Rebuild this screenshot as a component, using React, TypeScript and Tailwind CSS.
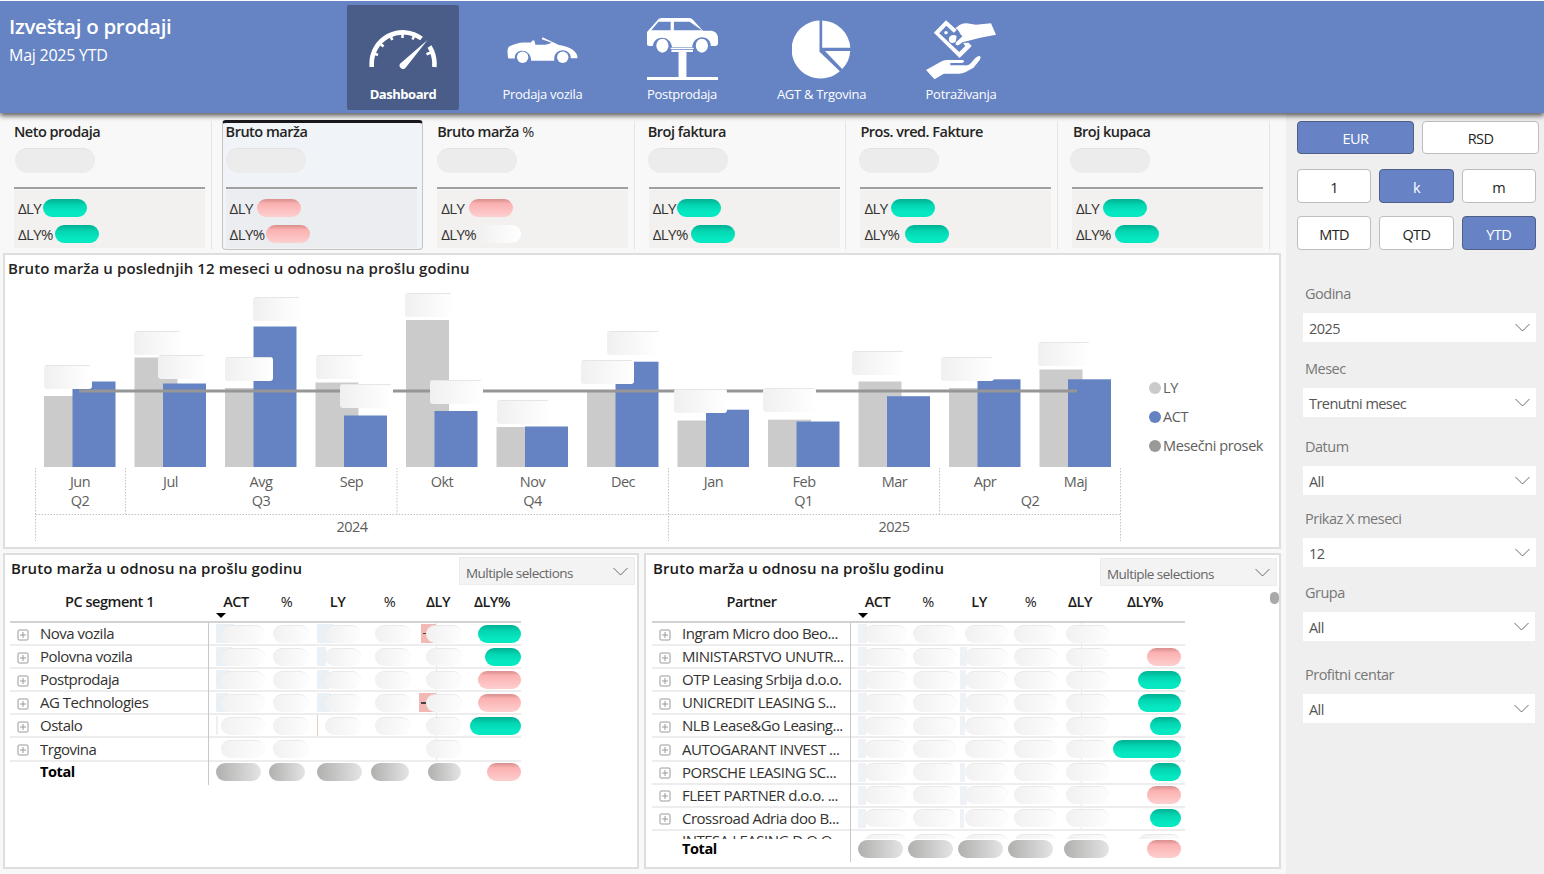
import type { ReactNode } from 'react';
import clsx from 'clsx';

type Tone = 'green' | 'red' | 'blank';

interface Kpi {
  title: ReactNode;
  titleClass?: string;
  pillClass?: string;
  delta: [Tone, string];
  deltaPct: [Tone, string];
  selected?: boolean;
}

interface Row {
  name: string;
  cells: string[];
  act?: string;
  ly?: string;
  diff?: string;
  tone?: Tone;
  size?: string;
}

const TONES: Record<Tone, string> = {
  green: 'bg-linear-to-b from-[#00b596] from-5% via-[#03d6b2] via-35% to-[#06e8c1] to-75%',
  red: 'bg-linear-to-b from-[#dc9492] from-5% via-[#fbb0b0] via-25% to-[#fdcfcf]',
  blank: 'bg-linear-to-r from-[#f0f0f0] to-white',
};

const KPIS: Kpi[] = [
  { title: 'Neto prodaja', pillClass: 'ml-px', delta: ['green', 'w-[25px]'], deltaPct: ['green', 'w-[37px]'] },
  { title: 'Bruto marža', delta: ['red', 'w-[27px]'], deltaPct: ['red', 'w-[36px]'], selected: true },
  { title: <>Bruto marža <span className="font-normal">%</span></>, delta: ['red', 'w-[28px]'], deltaPct: ['blank', 'w-[36px]'] },
  { title: 'Broj faktura', titleClass: '-ml-px', pillClass: '-ml-px', delta: ['green', 'w-[24px]'], deltaPct: ['green', 'w-[38px]'] },
  { title: 'Pros. vred. Fakture', pillClass: '-ml-px', delta: ['green', 'w-[27px]'], deltaPct: ['green', 'w-[41px]'] },
  { title: 'Broj kupaca', titleClass: 'ml-px', pillClass: '-ml-[2px]', delta: ['green', 'w-[27px]'], deltaPct: ['green', 'w-[39px]'] },
];

// tops of the LY and ACT bars per month
const MONTHS = [
  { name: 'Jun', ly: 396, act: 381.5 },
  { name: 'Jul', ly: 357.5, act: 383.5 },
  { name: 'Avg', ly: 388, act: 326.5 },
  { name: 'Sep', ly: 382.5, act: 415.5 },
  { name: 'Okt', ly: 320, act: 411 },
  { name: 'Nov', ly: 427, act: 426.5 },
  { name: 'Dec', ly: 391, act: 361.7 },
  { name: 'Jan', ly: 420.5, act: 409.7 },
  { name: 'Feb', ly: 419.7, act: 421.5 },
  { name: 'Mar', ly: 381.5, act: 396.2 },
  { name: 'Apr', ly: 388, act: 379.3 },
  { name: 'Maj', ly: 369.5, act: 379.3 },
];

const VALUE_BOXES = [
  [44, 365, 48], [134, 331, 48], [158, 355, 48], [253, 297, 48], [225, 357, 48], [316, 355, 48],
  [340, 384, 53], [405, 293, 48], [430, 380, 53], [497, 400, 53], [607, 331, 53], [581, 360, 53],
  [674, 389, 53], [763, 388, 53], [852, 351, 53], [941, 357, 53], [1038, 342, 53],
];

const ALL = ['a', 'p', 'l', 'q', 'd'];

const SEGMENTS: Row[] = [
  { name: 'Nova vozila', cells: ALL, act: 'w-[18px]', ly: 'w-[16px]', diff: 'left-[10px] w-[15px]', tone: 'green', size: 'w-[43px]' },
  { name: 'Polovna vozila', cells: ALL, act: 'w-[16px]', ly: 'w-[9px]', tone: 'green', size: 'w-[36px]' },
  { name: 'Postprodaja', cells: ALL, act: 'w-[14px]', ly: 'w-[12px]', tone: 'red', size: 'w-[43px]' },
  { name: 'AG Technologies', cells: ALL, act: 'w-[12px]', ly: 'w-[14px]', diff: 'left-[8px] w-[17px]', tone: 'red', size: 'w-[43px]' },
  { name: 'Ostalo', cells: ALL, act: 'w-[2px]', tone: 'green', size: 'w-[51px]' },
  { name: 'Trgovina', cells: ['a', 'p', 'd'] },
];

const PARTNERS: Row[] = [
  { name: 'Ingram Micro doo Beo...', cells: ALL, act: 'w-[9px]' },
  { name: 'MINISTARSTVO UNUTR...', cells: ALL, act: 'w-[9px]', ly: 'w-[7px]', tone: 'red', size: 'w-[34px]' },
  { name: 'OTP Leasing Srbija d.o.o.', cells: ALL, act: 'w-[9px]', ly: 'w-[6px]', tone: 'green', size: 'w-[43px]' },
  { name: 'UNICREDIT LEASING S...', cells: ALL, act: 'w-[9px]', ly: 'w-[6px]', tone: 'green', size: 'w-[43px]' },
  { name: 'NLB Lease&Go Leasing...', cells: ALL, act: 'w-[8px]', ly: 'w-[5px]', tone: 'green', size: 'w-[31px]' },
  { name: 'AUTOGARANT INVEST ...', cells: ALL, act: 'w-[8px]', tone: 'green', size: 'w-[68px]' },
  { name: 'PORSCHE LEASING SC...', cells: ALL, act: 'w-[8px]', ly: 'w-[5px]', tone: 'green', size: 'w-[31px]' },
  { name: 'FLEET PARTNER d.o.o. ...', cells: ALL, act: 'w-[8px]', ly: 'w-[7px]', tone: 'red', size: 'w-[34px]' },
  { name: 'Crossroad Adria doo B...', cells: ALL, act: 'w-[8px]', ly: 'w-[4px]', tone: 'green', size: 'w-[31px]' },
];

const FILTERS = [
  { label: 'Godina', value: '2025', gap: 'mt-[34px]', width: 'w-[233px]' },
  { label: 'Mesec', value: 'Trenutni mesec', gap: 'mt-[17px]', width: 'w-[233px]' },
  { label: 'Datum', value: 'All', gap: 'mt-[20px]', width: 'w-[233px]' },
  { label: 'Prikaz X meseci', value: '12', gap: 'mt-[14px]', width: 'w-[233px]' },
  { label: 'Grupa', value: 'All', gap: 'mt-[16px]', width: 'w-[232px]' },
  { label: 'Profitni centar', value: 'All', gap: 'mt-[24px]', width: 'w-[232px]' },
];

function GaugeIcon() {
  return (
    <svg width="68" height="40" viewBox="0 0 68 40" fill="none" stroke="white">
      <path d="M2.700 38v-2.500A31.200 31.200 0 0 1 52.500 9.500M60.500 17.500A33 33 0 0 1 65.300 38" strokeWidth="4.600" />
      <path d="M5 24.500l4 1.500M11 14.500l3.500 3M21.500 7l1.800 4M33.500 3v6M45.500 6l-2 4.500M62 23.500l-4.500 1.700" strokeWidth="2.600" />
      <path d="M58.500 11 36.800 38.500a3.300 3.300 0 0 1-5.500-4z" fill="white" stroke="none" />
    </svg>
  );
}

function ConvertibleIcon() {
  return (
    <svg width="71" height="27" viewBox="0 0 200 80" preserveAspectRatio="none" fill="white">
      <path d="M3 62C1 48 0 34 6 28 18 22 34 16 48 16h20l3-6h6l3 13h28c8-2 15-5 18-6L98 7l2-6 46 23c24 4 40 11 49 25 3 4 4 9 3 14h-18c0-32-46-32-47 0v7H68C68 32 20 32 22 64H6z" />
      <ellipse cx="44" cy="60" rx="16" ry="17" />
      <ellipse cx="157" cy="60" rx="16" ry="17" />
    </svg>
  );
}

function LiftIcon() {
  return (
    <svg width="71" height="62" viewBox="0 0 198 186" preserveAspectRatio="none" fill="white">
      <path fillRule="evenodd" d="M0 78V42L28 8q4-8 12-8h78q6 0 10 5l28 33h24q14 2 18 18v20q0 8-8 8h-12c0-36-50-36-52 4H70C66 50 20 50 16 84 6 84 0 84 0 78zM32 11 12 37h54V11H40zM75 11v26h78l-34-26z" />
      <ellipse cx="43" cy="83" rx="17" ry="21" />
      <ellipse cx="153" cy="83" rx="17" ry="21" />
      <path d="M66 89h64v4H66zM68 95h60v7h-18v75h88v9H0v-9h88v-75H68z" />
    </svg>
  );
}

function PieIcon() {
  return (
    <svg width="59" height="59" viewBox="0 0 59 59" fill="white">
      <path d="M27.500.500v31.200L47.800 51.200A29 29 0 1 1 27.500.500z" />
      <path d="M30.200.500A29 29 0 0 1 58.300 27.800H30.200z" />
      <path d="M33 31h25.200a28 28 0 0 1-8 18z" />
    </svg>
  );
}

function HandsIcon() {
  return (
    <svg width="70" height="60" viewBox="0 0 196 180" preserveAspectRatio="none" fill="white">
      <path fillRule="evenodd" d="M56 1 86 30 78 38 57 17 37 40 93 96 110 78 104 69 119 68 128 78 94 114 22 38z" />
      <circle cx="56" cy="38" r="5" />
      <path d="M64 56c2-10 12-14 22-8l-3 17c-9 8-20 3-19-9z" />
      <path d="M82 25 94 15q8-6 20-5l26 4 42-4 14 34-44 9-22 6-28 8-10 8q-12 4-8-8l18-18c-10-10-8-18-20-25z" />
      <path d="M0 150l44-26q7-4 16-4h42q10 2 0 9H68v7h40q12 2 18-7l12-15q12-10 15-3l-2 8-18 24-23 14q-10 5-22 4H50L24 178z" />
    </svg>
  );
}

const NAV = [
  { label: 'Dashboard', icon: <GaugeIcon />, active: true },
  { label: 'Prodaja vozila', icon: <ConvertibleIcon />, pad: 'pb-[16px]' },
  { label: 'Postprodaja', icon: <LiftIcon /> },
  { label: 'AGT & Trgovina', icon: <PieIcon />, pad: 'pb-px' },
  { label: 'Potraživanja', icon: <HandsIcon /> },
];

function Chevron() {
  return (
    <svg width="15" height="9" viewBox="0 0 15 9" fill="none" stroke="#6b6b6b">
      <path d="M.5 1l7 7 7-7" />
    </svg>
  );
}

function KpiCard({ kpi }: { kpi: Kpi }) {
  const rows = [
    { label: 'ΔLY', value: kpi.delta },
    { label: 'ΔLY%', value: kpi.deltaPct },
  ];
  return (
    <div className="w-[211.6px] shrink-0 pl-[10px]">
      <div
        className={clsx(
          'h-[130px] border border-t-[3px] pl-[3px]',
          kpi.selected ? 'rounded-[4px] border-[#c4c4c4] border-t-[#17171c] bg-[#f0f3f7]' : 'border-transparent border-r-[#e4e4e4]',
        )}
      >
        <h3 className={clsx('text-[14.5px] leading-[18px] font-semibold tracking-[-0.5px] text-[#252423]', kpi.titleClass)}>{kpi.title}</h3>
        <div className={clsx('mt-[7px] h-[25px] w-[80px] rounded-full border-t border-[#e2e2e2] bg-[#ececec]', kpi.pillClass)} />
        <div className="mt-[14px] h-[2px] w-[191px] bg-[#a0a0a0]" />
        <div className={clsx('mt-px flex h-[58px] w-[191px] flex-col gap-2 pt-[9px] pl-1', kpi.selected ? 'bg-[#ebedf1]' : 'bg-[#f2f1ef]')}>
          {rows.map(({ label, value: [tone, width] }) => (
            <div key={label} className="flex h-[18px] items-center">
              <span className={clsx('shrink-0 text-[15px] leading-[16px] tracking-[-0.6px] text-[#33322f]', width)}>{label}</span>
              <span className={clsx('h-[18px] w-[44px] rounded-full', TONES[tone])} />
            </div>
          ))}
        </div>
      </div>
    </div>
  );
}

function TrendChart() {
  return (
    <svg className="block" width="1140" height="260" viewBox="5 282 1140 260" fontSize="14.5" letterSpacing="-0.5">
      <defs>
        <linearGradient id="box" x1="0" x2="1">
          <stop offset="0" stopColor="#f0f0f0" />
          <stop offset="1" stopColor="#ffffff" />
        </linearGradient>
      </defs>
      {MONTHS.map((m, i) => (
        <g key={m.name}>
          <rect x={44 + i * 90.5} y={m.ly} width="43" height={467 - m.ly} fill="#cbcbcb" />
          <rect x={72.5 + i * 90.5} y={m.act} width="43" height={467 - m.act} fill="#6583c3" />
          <text x={80 + i * 90.5} y="486.500" textAnchor="middle" fill="#605e5c">{m.name}</text>
        </g>
      ))}
      <path d="M79 391H1077" stroke="#969696" strokeWidth="3" />
      {VALUE_BOXES.map(([x, y, w]) => (
        <g key={`${x}-${y}`}>
          <rect x={x} y={y} width={w} height="24" rx="3" fill="url(#box)" />
          <path d={`M${x + 2} ${y + 0.5}h${w - 4}`} stroke="#e6e6e6" />
        </g>
      ))}
      <g fill="#605e5c" textAnchor="middle">
        <text x="80" y="506">Q2</text>
        <text x="261" y="506">Q3</text>
        <text x="532.500" y="506">Q4</text>
        <text x="803.500" y="506">Q1</text>
        <text x="1030" y="506">Q2</text>
        <text x="352" y="532">2024</text>
        <text x="894" y="532">2025</text>
      </g>
      <path
        d="M35.500 514.500H1120.500M35.500 468V541M125.500 468V514M397 468V514M668.500 468V541M939.500 468V514M1120.500 468V541"
        stroke="#c4c4c4"
        strokeDasharray="1.500 1.500"
        fill="none"
      />
    </svg>
  );
}

function Selector({ className }: { className?: string }) {
  return (
    <div className={clsx('flex h-[28px] items-center justify-between border border-[#ececec] bg-[#f3f3f3] pr-[6px] pl-[6px]', className)}>
      <span className="pt-[4px] text-[13.5px] leading-[18px] tracking-[-0.55px] text-[#666]">Multiple selections</span>
      <Chevron />
    </div>
  );
}

function Expander() {
  return (
    <svg width="12" height="12" viewBox="0 0 12 12" fill="none" stroke="#9a9a9a">
      <rect x="1" y="1" width="10" height="10" rx="1" />
      <path d="M3 6h6M6 3v6" />
    </svg>
  );
}

function GhostPill({ className }: { className: string }) {
  return <span className={clsx('relative h-[18px] rounded-full border-t border-[#e9e9e9] bg-linear-to-r from-[#f1f1f1] to-[#fdfdfd]', className)} />;
}

interface MatrixProps {
  heading: string;
  grid: string;
  rows: Row[];
  headPads: string[];
  widths: string[];
  totals: string[];
  totalDelta: string;
  lyLeft: string;
  diffLeft: string;
  endPad: string;
  tint: string;
  clippedRow?: string;
}

function Matrix(p: MatrixProps) {
  const headers = ['ACT', '%', 'LY', '%', 'ΔLY', 'ΔLY%'];
  return (
    <div className="text-[15px] tracking-[-0.5px] text-[#33322f]">
      <div className={clsx('relative grid h-[45px] border-b-2 border-[#d2d2d2] pt-[14px] text-[14.5px] leading-5 font-semibold tracking-[-0.45px] text-[#1c1b1a]', p.grid)}>
        <span className="text-center">{p.heading}</span>
        {headers.map((h, i) => (
          <span key={i} className={clsx('text-center', p.headPads[i], h === '%' && 'font-medium')}>{h}</span>
        ))}
        <span className="absolute bottom-[3px] left-[206px] border-x-[5px] border-t-[5px] border-x-transparent border-t-black" />
      </div>
      {p.rows.map((row) => (
        <div key={row.name} className={clsx('grid h-[23.1px] border-b-2 border-[#ededed]', p.grid)}>
          <span className="-mb-[2px] flex items-center gap-[11px] border-r border-[#c8c8c8] pl-[7px] leading-[21px] whitespace-nowrap">
            <Expander />
            <span className="-mt-[2px]">{row.name}</span>
          </span>
          {ALL.map((k, i) => (
            <span key={k} className="relative flex items-center justify-end">
              {k === 'a' && row.act && <i className={clsx('absolute top-[1px] left-[7px] h-[19px]', p.tint, row.act)} />}
              {k === 'l' && row.ly && <i className={clsx('absolute top-[1px] h-[19px]', p.tint, p.lyLeft, row.ly)} />}
              {k === 'l' && row.name === 'Ostalo' && <i className="absolute top-0 left-[8px] h-full w-px bg-[#e8cfc4]" />}
              {k === 'd' && <i className={clsx('absolute top-0 h-full w-px bg-[#e8e8e8]', p.diffLeft)} />}
              {k === 'd' && row.diff && (
                <i className={clsx('absolute top-[1px] flex h-[19px] items-center bg-[#f2b8b3]', row.diff)}>
                  <b className="ml-[2px] h-[1.5px] w-[5px] bg-[#444]" />
                </i>
              )}
              {row.cells.includes(k) && <GhostPill className={p.widths[i]} />}
            </span>
          ))}
          <span className={clsx('flex items-center justify-end', p.endPad)}>
            {row.tone && <span className={clsx('h-[18px] rounded-full', TONES[row.tone], row.size)} />}
          </span>
        </div>
      ))}
      {p.clippedRow && (
        <div className={clsx('grid h-[8px] overflow-hidden', p.grid)}>
          <span className="h-[8px] overflow-hidden border-r border-[#c8c8c8] pl-[30px] leading-[19px] whitespace-nowrap">{p.clippedRow}</span>
          {p.widths.map((w, i) => (
            <span key={i} className="flex justify-end pt-[3px]"><GhostPill className={w} /></span>
          ))}
          <span className="flex justify-end pt-[3px] pr-1"><GhostPill className="w-[43px]" /></span>
        </div>
      )}
      <div className={clsx('grid h-[20px]', p.grid)}>
        <span className="-mb-[3px] flex items-start border-r border-[#c8c8c8] pl-[30px] text-[14.5px] leading-[20px] font-bold tracking-[-0.4px] text-black">Total</span>
        {p.totals.map((t, i) => (
          <span key={i} className="flex items-center justify-end">
            <span className={clsx('h-[18px] shrink-0 rounded-full bg-linear-to-r from-[#b0b0af] to-[#e4e4e4]', t)} />
          </span>
        ))}
        <span className={clsx('flex items-center justify-end', p.endPad)}>
          <span className={clsx('h-[18px] rounded-full', TONES.red, p.totalDelta)} />
        </span>
      </div>
    </div>
  );
}

function Toggle({ children, active, className }: { children: ReactNode; active?: boolean; className: string }) {
  return (
    <button
      className={clsx(
        'flex items-center justify-center rounded-[4px] border pt-[3px] text-[14.5px] tracking-[-0.6px]',
        active ? 'border-[#4f5f86] bg-[#6783c5] text-white' : 'border-[#bdbdbd] bg-white text-[#252423]',
        className,
      )}
    >
      {children}
    </button>
  );
}

export default function App() {
  return (
    <div className="flex h-[874px] w-[1544px] flex-col overflow-hidden bg-[#f8f8f8] font-['Open_Sans','Noto_Sans',sans-serif]">
      <header className="relative z-10 flex h-[113px] shrink-0 border-t border-white bg-[#6683c3] text-white shadow-[0_3px_5px_rgba(0,0,0,0.6)]">
        <div className="w-[347px] pt-[12px] pl-[9px]">
          <h1 className="text-[20.500px] leading-[26px] font-semibold tracking-[-0.3px]">Izveštaj o prodaji</h1>
          <p className="mt-[5px] text-[16px] leading-[22px] tracking-[-0.25px]">Maj 2025 YTD</p>
        </div>
        <nav className="flex gap-[27.500px] pt-[4px]">
          {NAV.map((item) => (
            <a key={item.label} className={clsx('flex h-[105px] w-[112px] flex-col items-center rounded-[2px]', item.active && 'bg-[#4a5d88]')}>
              <span className={clsx('flex h-[75px] items-end', item.active ? 'pb-[11px]' : item.pad)}>{item.icon}</span>
              <span className={clsx('mt-[5px] text-[13px] leading-[18px] whitespace-nowrap', item.active ? 'font-bold tracking-[-0.45px]' : 'tracking-[-0.3px]')}>{item.label}</span>
            </a>
          ))}
        </nav>
      </header>

      <div className="flex min-h-0 flex-1">
        <main className="flex w-[1286px] shrink-0 flex-col">
          <section className="flex h-[140px] shrink-0 pt-[7px]">
            {KPIS.map((kpi, i) => (
              <KpiCard key={i} kpi={kpi} />
            ))}
          </section>

          <section className="ml-[3px] h-[296px] w-[1278px] shrink-0 border-2 border-[#dedede] bg-white">
            <h2 className="h-[27px] pt-[3px] pl-[3px] text-[15px] leading-5 font-semibold tracking-[0.1px] text-[#252423]">
              Bruto marža u poslednjih 12 meseci u odnosu na prošlu godinu
            </h2>
            <div className="flex">
              <TrendChart />
              <ul className="mt-[96px] flex flex-col gap-[9px] text-[14.500px] leading-5 tracking-[-0.4px] whitespace-nowrap text-[#605e5c]">
                {[['LY', 'bg-[#cbcbcb]'], ['ACT', 'bg-[#6583c3]'], ['Mesečni prosek', 'bg-[#999]']].map(([label, dot]) => (
                  <li key={label} className="ml-[4px] flex items-center gap-[2px]">
                    <span className={clsx('size-[12px] rounded-full', dot)} />
                    {label}
                  </li>
                ))}
              </ul>
            </div>
          </section>

          <section className="mt-1 ml-[3px] flex h-[316px] shrink-0 gap-[5px]">
            <div className="w-[636px] border-2 border-[#dedede] bg-white pl-[5px]">
              <div className="flex h-[23px] justify-between pr-[2px]">
                <h2 className="pt-[3px] pl-px text-[15px] leading-5 font-semibold tracking-[0.1px] text-[#1c1b1a]">Bruto marža u odnosu na prošlu godinu</h2>
                <Selector className="relative mt-[2px] w-[176px]" />
              </div>
              <div className="w-[511px]">
                <Matrix
                  heading="PC segment 1"
                  grid="grid-cols-[199px_56px_44px_52px_50px_51px_59px]"
                  rows={SEGMENTS}
                  headPads={['pr-[2px]', 'pr-px', 'pl-[5px]', 'pl-[7px]', 'pl-[3px]', 'pl-px']}
                  widths={['w-[44px]', 'w-[36px]', 'w-[36px]', 'w-[36px]', 'w-[36px]']}
                  totals={['w-[45px] mr-[4px]', 'w-[36px] mr-[4px]', 'w-[45px] -mr-px', 'w-[38px] mr-[2px]', 'w-[33px] mr-px']}
                  totalDelta="w-[34px]"
                  lyLeft="left-[8px]"
                  diffLeft="left-[25px]"
                  endPad=""
                  tint="bg-[#e9f0f6]"
                />
              </div>
            </div>
            <div className="w-[637px] border-2 border-[#dedede] bg-white pl-[6px]">
              <div className="flex h-[23px] justify-between pr-[2px]">
                <h2 className="pt-[3px] pl-px text-[15px] leading-5 font-semibold tracking-[0.1px] text-[#1c1b1a]">Bruto marža u odnosu na prošlu godinu</h2>
                <Selector className="relative mt-[3px] w-[177px]" />
              </div>
              <div className="flex">
                <div className="w-[533px]">
                  <Matrix
                    heading="Partner"
                    grid="grid-cols-[199px_56px_49px_52px_49px_52px_76px]"
                    rows={PARTNERS}
                    headPads={['pr-[3px]', 'pr-[7px]', 'pr-[6px]', 'pr-[4px]', 'pr-[6px]', 'pr-[4px]']}
                    widths={['w-[43px]', 'w-[43px]', 'w-[43px]', 'w-[43px]', 'w-[43px]']}
                    totals={['w-[45px] mr-[4px]', 'w-[45px] mr-[3px]', 'w-[45px] mr-[5px]', 'w-[45px] mr-[4px]', 'w-[45px]']}
                    totalDelta="w-[34px]"
                    lyLeft="left-[4px]"
                    diffLeft="left-[24px]"
                    endPad="pr-1"
                    tint="bg-[#eef2f6]"
                    clippedRow="INTESA LEASING D.O.O."
                  />
                </div>
                <div className="mt-[14px] ml-[85px] h-[12px] w-[9px] rounded-full bg-[#a9a9a9]" />
              </div>
            </div>
          </section>
        </main>

        <aside className="w-[258px] bg-[#efefef] pt-[8px] pl-[11px]">
          <div className="flex gap-2">
            <Toggle active className="h-[33px] w-[117px]">EUR</Toggle>
            <Toggle className="h-[33px] w-[117px]">RSD</Toggle>
          </div>
          <div className="mt-[15px] flex gap-2">
            <Toggle className="h-[34px] w-[74.300px]">1</Toggle>
            <Toggle active className="h-[34px] w-[74.300px]">k</Toggle>
            <Toggle className="h-[34px] w-[74.300px]">m</Toggle>
          </div>
          <div className="mt-[13px] flex gap-2">
            <Toggle className="h-[34px] w-[74.300px]">MTD</Toggle>
            <Toggle className="h-[34px] w-[74.300px]">QTD</Toggle>
            <Toggle active className="h-[34px] w-[74.300px]">YTD</Toggle>
          </div>
          <div className="pl-[6px]">
            {FILTERS.map((f) => (
              <div key={f.label} className={f.gap}>
                <p className="pl-[2px] text-[14.500px] leading-5 tracking-[-0.5px] text-[#777]">{f.label}</p>
                <div className={clsx('mt-[9px] flex h-[29px] items-center justify-between bg-white pr-[6px] pl-[6px]', f.width)}>
                  <span className="pt-[3px] text-[14.500px] leading-5 tracking-[-0.550px] text-[#555]">{f.value}</span>
                  <Chevron />
                </div>
              </div>
            ))}
          </div>
        </aside>
      </div>
    </div>
  );
}
